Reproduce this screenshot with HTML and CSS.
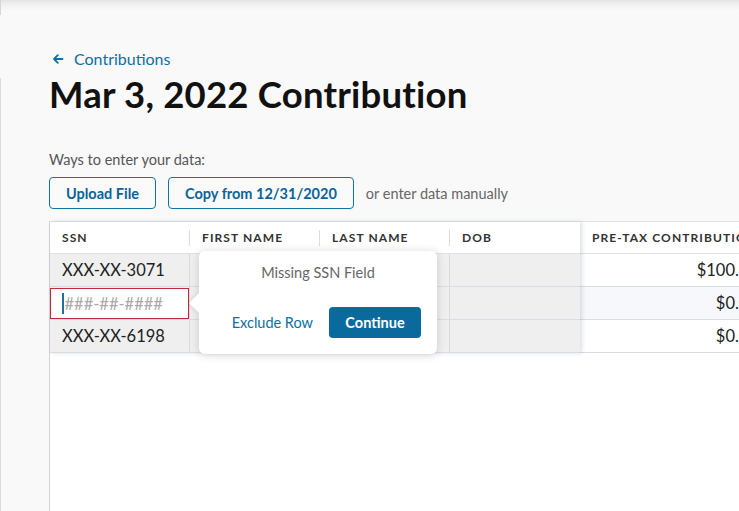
FILE: index.html
```html
<!DOCTYPE html>
<html lang="en">
<head>
<meta charset="utf-8">
<title>Mar 3, 2022 Contribution</title>
<link rel="stylesheet" href="styles.css">
</head>
<body>
<div class="shell">
  <div class="rail"></div>
  <main class="main">
    <div class="topshade"></div>
    <a class="back" href="#">
      <svg class="back-icon" width="12" height="12" viewBox="0 0 12 12" aria-hidden="true">
        <path d="M10.5 6H2M5.8 2.2L2 6l3.8 3.8" fill="none" stroke="currentColor" stroke-width="1.8" stroke-linecap="round" stroke-linejoin="round"/>
      </svg>
      <span>Contributions</span>
    </a>
    <h1 class="title">Mar 3, 2022 Contribution</h1>

    <p class="ways">Ways to enter your data:</p>
    <div class="actions">
      <button class="btn-outline">Upload File</button>
      <button class="btn-outline">Copy from 12/31/2020</button>
      <span class="manual">or enter data manually</span>
    </div>

    <section class="table">
      <div class="grid">
        <div class="frozen">
          <div class="row head">
            <div class="cell c-ssn">SSN</div>
            <div class="cell c-first">First Name</div>
            <div class="cell c-last">Last Name</div>
            <div class="cell c-dob">DOB</div>
          </div>
          <div class="row body">
            <div class="cell c-ssn">XXX-XX-3071</div>
            <div class="cell c-first"></div>
            <div class="cell c-last"></div>
            <div class="cell c-dob"></div>
          </div>
          <div class="row body">
            <div class="cell c-ssn editing">
              <div class="ssn-input"><span class="caret"></span><span class="placeholder">###-##-####</span></div>
            </div>
            <div class="cell c-first"></div>
            <div class="cell c-last"></div>
            <div class="cell c-dob"></div>
          </div>
          <div class="row body">
            <div class="cell c-ssn">XXX-XX-6198</div>
            <div class="cell c-first"></div>
            <div class="cell c-last"></div>
            <div class="cell c-dob"></div>
          </div>
        </div>
        <div class="scrolling">
          <div class="row head"><div class="cell c-pretax">Pre-Tax Contribution</div></div>
          <div class="row body"><div class="cell c-pretax num">$100.00</div></div>
          <div class="row body hover"><div class="cell c-pretax num">$0.00</div></div>
          <div class="row body"><div class="cell c-pretax num">$0.00</div></div>
        </div>
      </div>

      <div class="popover" role="dialog">
        <span class="arrow"></span>
        <p class="pop-msg">Missing SSN Field</p>
        <div class="pop-actions">
          <a class="pop-link" href="#">Exclude Row</a>
          <button class="btn-primary">Continue</button>
        </div>
      </div>
    </section>
  </main>
</div>
</body>
</html>
```

FILE: styles.css
```css
html, body {
  margin: 0;
  padding: 0;
  height: 100%;
  overflow: hidden;
}
body {
  background: #f9f9f9;
  font-family: Lato, "Noto Sans", "Liberation Sans", sans-serif;
  color: #222;
}
.shell {
  display: flex;
  height: 511px;
}
.rail {
  width: 1px;
  flex: none;
  background: linear-gradient(to bottom, #d6d6d6 0, #d6d6d6 15px, transparent 15px, transparent 78px, #dcdcdc 78px);
}
.main {
  flex: 1;
  min-width: 0;
  padding-left: 48px;
  display: flex;
  flex-direction: column;
  position: relative;
}
.topshade {
  height: 10px;
  margin-left: -48px;
  background: linear-gradient(to bottom, #e4e4e4 0, #efefef 4px, #f9f9f9 10px);
  flex: none;
}
.back {
  margin-top: 39px;
  display: flex;
  align-items: center;
  gap: 10px;
  color: #0d6fa3;
  text-decoration: none;
  font-size: 16px;
  line-height: 20px;
  padding-left: 3px;
}
.back-icon { flex: none; }
.title {
  margin: 5px 0 0;
  font-size: 36.5px;
  line-height: 40px;
  font-weight: 700;
  color: #111;
  letter-spacing: 0.2px;
}
.ways {
  margin: 37px 0 0;
  font-size: 14.5px;
  line-height: 18px;
  color: #555;
}
.actions {
  margin-top: 8px;
  display: flex;
  align-items: center;
  gap: 12px;
}
.btn-outline {
  height: 32px;
  border: 1px solid #1172a6;
  border-radius: 4px;
  background: #fafafa;
  color: #0b6497;
  font-family: inherit;
  font-size: 14.5px;
  font-weight: 700;
  padding: 0 16px;
}
.manual {
  font-size: 14.5px;
  color: #666;
}
.table {
  margin-top: 12px;
  position: relative;
  flex: 1;
  background: #fff;
  border-top: 1px solid #dde2e8;
  border-left: 1px solid #d2d2d2;
  margin-right: -300px;
}
.grid {
  display: flex;
  align-items: flex-start;
}
.frozen {
  width: 530px;
  flex: none;
  box-shadow: 2px 0 4px rgba(60, 80, 100, 0.18);
  position: relative;
  z-index: 1;
}
.scrolling {
  width: 190px;
  flex: none;
}
.row {
  display: flex;
  border-bottom: 1px solid #d8dde3;
}
.row.head {
  height: 31px;
  border-bottom-color: #dde2e8;
  background: #fff;
}
.row.body {
  height: 32px;
  background: #efefef;
}
.scrolling .row.body { background: #fff; }
.scrolling .row.body.hover { background: #f6f8fb; }
.cell {
  box-sizing: border-box;
  padding: 0 12px;
  display: flex;
  align-items: center;
  position: relative;
}
.c-ssn { width: 140px; }
.c-first, .c-last, .c-dob { width: 130px; }
.c-pretax { width: 190px; }
.head .cell {
  font-size: 12px;
  font-weight: 700;
  letter-spacing: 1.1px;
  text-transform: uppercase;
  color: #333;
}
.head .c-ssn::after, .head .c-first::after, .head .c-last::after {
  content: "";
  position: absolute;
  right: 0;
  top: 8px;
  bottom: 7px;
  width: 1px;
  background: #dcdcdc;
}
.body .cell {
  font-size: 16.5px;
  color: #222;
  border-right: 1px solid #dadada;
}
.body .c-dob, .scrolling .body .cell { border-right: none; }
.num {
  justify-content: flex-end;
}
.cell.editing {
  padding: 0;
  align-items: stretch;
}
.ssn-input {
  flex: 1;
  margin: 1px 0 0 0;
  border: 1px solid #c4283f;
  background: #fff;
  display: flex;
  align-items: center;
  padding-left: 11px;
}
.caret {
  width: 1.5px;
  height: 21px;
  background: #1a6fa3;
  margin-right: 1px;
}
.placeholder {
  color: #aaa;
  font-size: 16.5px;
}
.popover {
  position: absolute;
  left: 149px;
  top: 29px;
  width: 238px;
  height: 103px;
  box-sizing: border-box;
  background: #fff;
  border-radius: 6px;
  box-shadow: 0 1px 10px rgba(0, 0, 0, 0.16);
  z-index: 3;
  display: flex;
  flex-direction: column;
}
.arrow {
  position: absolute;
  left: -7px;
  top: 45px;
  width: 14px;
  height: 14px;
  background: #fff;
  transform: rotate(45deg);
  box-shadow: -2px 2px 4px rgba(0, 0, 0, 0.06);
}
.pop-msg {
  margin: 13px 0 0;
  text-align: center;
  font-size: 14.5px;
  line-height: 18px;
  color: #666;
  position: relative;
}
.pop-actions {
  margin-top: auto;
  padding: 0 16px 16px;
  display: flex;
  justify-content: flex-end;
  align-items: center;
  gap: 16px;
  position: relative;
}
.pop-link {
  color: #0d6fa3;
  text-decoration: none;
  font-size: 14.5px;
}
.btn-primary {
  width: 92px;
  height: 31px;
  border: none;
  border-radius: 4px;
  background: #0a6a9e;
  color: #fff;
  font-family: inherit;
  font-size: 14.5px;
  font-weight: 700;
}
```
